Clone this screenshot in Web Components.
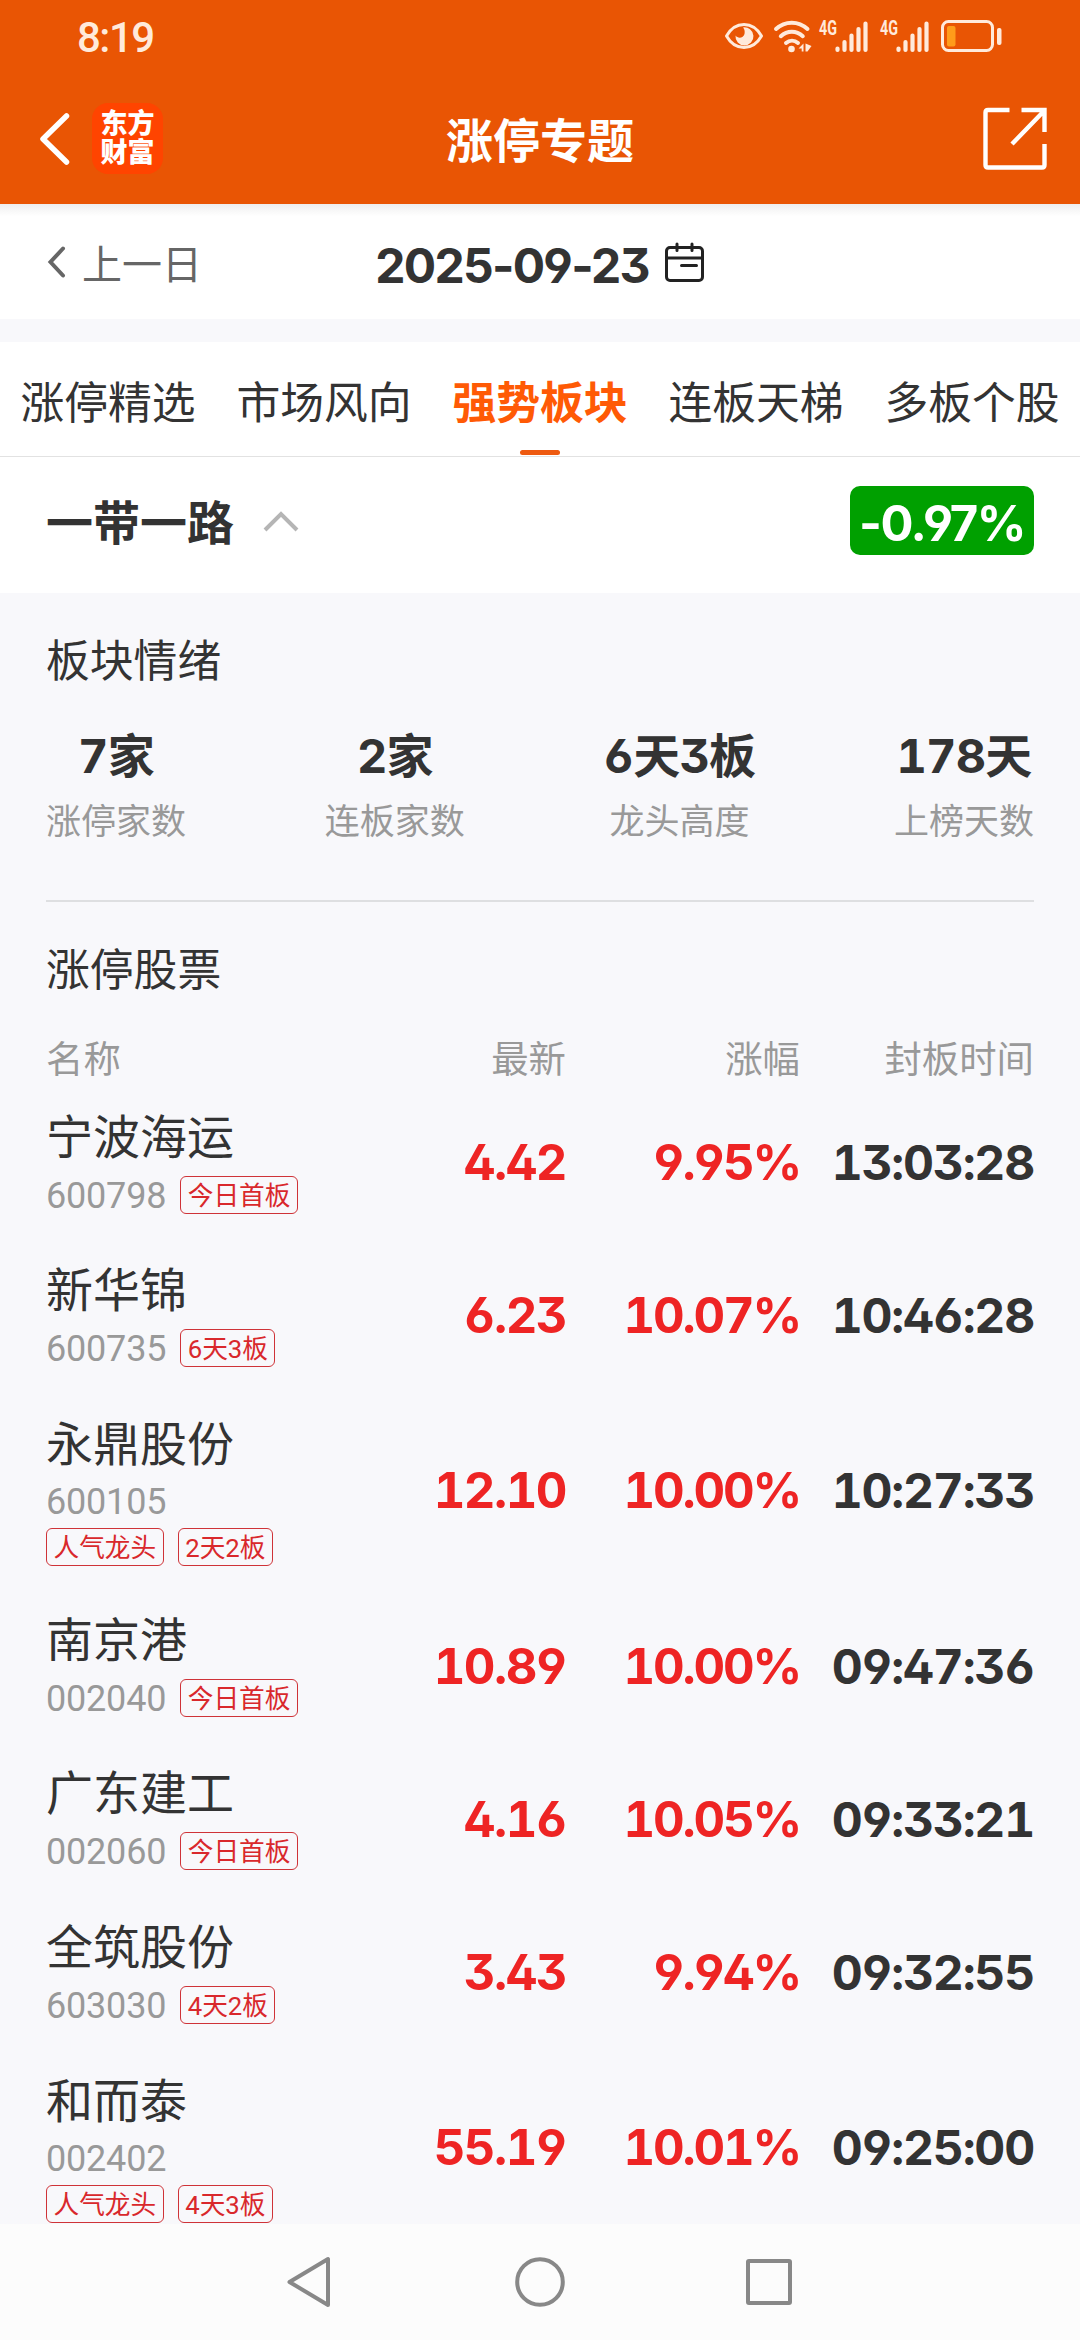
<!DOCTYPE html>
<html lang="zh-CN">
<head>
<meta charset="utf-8">
<title>涨停专题</title>
<style>
	body {
		margin: 0;
		width: 1080px;
		height: 2340px;
		overflow: hidden;
		background: #f8f8fb;
		color: #333;
		font-family: Roboto, "Noto Sans CJK SC", sans-serif;
	}
</style>
</head>
<body>
<limit-page></limit-page>

<script>
/**
 * Attach an open shadow root and fill it
 *
 * @param {HTMLElement} el
 * @param {string} html
 */
function render(el, html) {
	el.attachShadow({ mode: 'open' }).innerHTML = html;
}

class StatusBar extends HTMLElement {
	constructor() {
		super();
		const signal = `
			<svg width="51" height="42" viewBox="-1 -4 51 42">
				<text x="0" y="16" font-size="20" font-weight="700" textLength="18" lengthAdjust="spacingAndGlyphs">4G</text>
				<path fill="none" stroke="currentColor" stroke-width="4.2" stroke-linecap="round"
					d="M18.5 29.5v1.5M25.5 23v8M32.5 16.5v14.5M39.5 10v21M46.5 4.500v26.500"/>
			</svg>`;
		render(this, `
			<style>
				:host {
					display: flex;
					align-items: center;
					height: 72px;
					padding: 0 77px 0 77px;
					color: #ffeadb;
					fill: currentColor;
				}
				.time { flex: 1; font-size: 42px; font-weight: 500; letter-spacing: -1.500px; line-height: 76px; padding-top: 3px; }
				svg { display: block; }
				.eye { margin-right: 9px; }
				.wifi { margin-right: 6px; }
				.signals { display: flex; gap: 10px; margin-right: 10px; }
			</style>
			<div class="time">8:19</div>
			<svg class="eye" width="40" height="30" viewBox="0 0 40 30">
				<path d="M2.500 15C7 7 13 3.500 20 3.500S33 7 37.500 15C33 23 27 26.500 20 26.500S7 23 2.500 15z" fill="none" stroke="currentColor" stroke-width="3" stroke-linejoin="round"/>
				<path d="M19 6.500a9 9 0 1 1-7.500 8c2.500 3.500 8 2.500 9-1.500C21 10 20.500 8 19 6.500z"/>
			</svg>
			<svg class="wifi" width="39" height="34" viewBox="0 0 39 34">
				<g fill="none" stroke="currentColor" stroke-width="4" stroke-linecap="round">
					<path d="M3 10c9-8.500 22.500-8.500 31.500 0M7.800 17.200c6.500-6 15.500-6 22 0M13 24c3.500-3 8.500-3 12 0"/>
				</g>
				<circle cx="18.500" cy="30" r="3.300"/>
				<path d="M30.500 24.500v8h-1.800v-3h-3.200zM32.500 24.500l6 2.500-4 5.500h-2z"/>
			</svg>
			<div class="signals">${signal}${signal}</div>
			<svg width="63" height="34" viewBox="0 0 63 34">
				<rect x="2.500" y="2.500" width="50" height="29" rx="6" fill="none" stroke="currentColor" stroke-width="3"/>
				<rect x="7" y="7" width="8.500" height="20.500" rx="2" fill="#ff9c1a"/>
				<rect x="57" y="9" width="4.500" height="17" rx="2"/>
			</svg>
		`);
	}
}
customElements.define('status-bar', StatusBar);

class TitleBar extends HTMLElement {
	constructor() {
		super();
		render(this, `
			<style>
				:host {
					display: grid;
					grid-template-columns: 1fr auto 1fr;
					align-items: center;
					height: 132px;
					padding: 0 32px 0 38px;
					color: #fff;
				}
				.left { display: flex; align-items: center; gap: 22px; }
				.left svg { margin-top: 2px; }
				.logo {
					width: 71px;
					height: 71px;
					padding-top: 7px;
					box-sizing: border-box;
					border-radius: 16px;
					background: #ff4400;
					font-size: 27px;
					font-weight: 900;
					line-height: 29px;
					text-align: center;
				}
				.title { font-size: 47px; font-weight: 700; line-height: 60px; padding-top: 8px; margin-left: -6px; }
				.share { justify-self: end; margin-top: 1px; }
				svg { display: block; fill: none; stroke: #fff; }
			</style>
			<div class="left">
				<svg width="32" height="54" viewBox="0 0 32 54">
					<path d="M28.500 4L5 27l23.500 23" stroke-width="5.500" stroke-linecap="round" stroke-linejoin="round"/>
				</svg>
				<div class="logo">东方<br>财富</div>
			</div>
			<div class="title"><slot></slot></div>
			<svg class="share" width="67" height="66" viewBox="0 0 67 66">
				<path d="M28.500 4H7Q4.500 4 4.500 6.500V59q0 2.500 2.500 2.500h54q2.500 0 2.500-2.500V38M40.500 4h23v22M63 5L31 38" stroke-width="4.400"/>
			</svg>
		`);
	}
}
customElements.define('title-bar', TitleBar);

class DateBar extends HTMLElement {
	constructor() {
		super();
		render(this, `
			<style>
				:host {
					display: grid;
					grid-template-columns: 1fr auto 1fr;
					align-items: center;
					height: 115px;
					box-sizing: border-box;
					padding: 0 46px;
					background: linear-gradient(#eee, #fff 12px);
				}
				.prev { display: flex; align-items: center; gap: 15px; font-size: 40px; color: #666; }
				.date { display: flex; align-items: center; gap: 15px; }
				.date span { font: 700 48px/60px Inter; font-feature-settings: "ss01"; letter-spacing: -1.700px; padding-top: 9px; }
				.date svg { margin-top: 3px; }
				svg { display: block; fill: none; stroke-linecap: round; }
			</style>
			<div class="prev">
				<svg width="21" height="32" viewBox="0 0 21 32"><path d="M17 2.500L4.500 16 17 29.500" stroke="#666" stroke-width="4"/></svg>
				上一日
			</div>
			<div class="date">
				<span><slot></slot></span>
				<svg width="41" height="42" viewBox="0 0 41 42" stroke="#222" stroke-width="3">
					<rect x="2.500" y="5.500" width="36" height="33" rx="3.500"/>
					<path d="M2.500 16h36M13 2v6.500M28 2v6.500M17.500 23.500h15"/>
				</svg>
			</div>
			<div></div>
		`);
	}
}
customElements.define('date-bar', DateBar);

class TabItem extends HTMLElement {
	constructor() {
		super();
		render(this, `
			<style>
				:host {
					flex: 1;
					display: flex;
					flex-direction: column;
					align-items: center;
					font-size: 43.800px;
					line-height: 60px;
					padding-top: 32px;
				}
				:host([active]) { color: #ff5a05; font-weight: 700; }
				:host([active])::after {
					content: "";
					width: 40px;
					height: 5px;
					margin-top: 16px;
					border-radius: 3px;
					background: #ee5a10;
				}
			</style>
			<span><slot></slot></span>
		`);
	}
}
customElements.define('tab-item', TabItem);

class TabStrip extends HTMLElement {
	constructor() {
		super();
		render(this, `
			<style>
				:host {
					display: flex;
					height: 115px;
					box-sizing: border-box;
					margin-top: 23px;
					background: #fff;
					border-bottom: 1px solid #e2e2e2;
				}
			</style>
			<slot></slot>
		`);
	}
}
customElements.define('tab-strip', TabStrip);

class BoardHeader extends HTMLElement {
	constructor() {
		super();
		render(this, `
			<style>
				:host {
					display: flex;
					align-items: center;
					height: 136px;
					box-sizing: border-box;
					padding: 0 46px 9px;
					background: #fff;
				}
				.name { font-size: 47px; font-weight: 700; line-height: 60px; padding-top: 6px; }
				svg { margin-left: 29px; fill: none; stroke: #b5b5b5; stroke-width: 4; }
				.change {
					margin-left: auto;
					width: 184px;
					height: 69px;
					border-radius: 10px;
					background: #00a000;
					color: #fff;
					font: 700 49px/76px Inter;
					font-feature-settings: "ss01";
					letter-spacing: -1.500px;
					text-align: center;
				}
			</style>
			<div class="name"><slot></slot></div>
			<svg width="36" height="22" viewBox="0 0 36 22"><path d="M2 20L18 4l16 16"/></svg>
			<div class="change">${this.getAttribute('change')}</div>
		`);
	}
}
customElements.define('board-header', BoardHeader);

class SectionTitle extends HTMLElement {
	constructor() {
		super();
		render(this, `
			<style>
				:host { display: block; font-size: 43.800px; line-height: 60px; padding: 0 46px; }
			</style>
			<slot></slot>
		`);
	}
}
customElements.define('section-title', SectionTitle);

class StatItem extends HTMLElement {
	constructor() {
		super();
		render(this, `
			<style>
				:host { display: block; text-align: center; }
				.value {
					margin: -2px 0 1px;
					font: 700 47px/66px Inter, "Noto Sans CJK SC", sans-serif;
					font-feature-settings: "tnum", "ss01";
					letter-spacing: -.8px;
				}
				.label { font-size: 35px; line-height: 66px; color: #999; }
			</style>
			<div class="value">${this.getAttribute('value')}</div>
			<div class="label"><slot></slot></div>
		`);
	}
}
customElements.define('stat-item', StatItem);

class StatRow extends HTMLElement {
	constructor() {
		super();
		render(this, `
			<style>
				:host {
					display: flex;
					justify-content: space-between;
					height: 175px;
					margin: 33px 46px 39px;
					border-bottom: 2px solid #dedfe1;
				}
			</style>
			<slot></slot>
		`);
	}
}
customElements.define('stat-row', StatRow);

class ListHead extends HTMLElement {
	constructor() {
		super();
		render(this, `
			<style>
				:host {
					display: grid;
					grid-template-columns: 290px 230px 234px 234px;
					padding: 29px 46px 0;
					height: 55.500px;
					font-size: 37.400px;
					line-height: 60px;
					color: #999;
					text-align: right;
				}
				.name { text-align: left; }
			</style>
			<span class="name">名称</span>
			<span>最新</span>
			<span>涨幅</span>
			<span>封板时间</span>
		`);
	}
}
customElements.define('list-head', ListHead);

class StockRow extends HTMLElement {
	constructor() {
		super();
		const attr = (name) => this.getAttribute(name);
		const tags = attr('tags').split(' ');
		render(this, `
			<style>
				:host {
					display: grid;
					grid-template-columns: 290px 230px 234px 234px;
					align-items: center;
					height: 153.200px;
					padding: 0 46px;
				}
				:host([tall]) { height: 197.200px; }
				.stock { padding-bottom: 3px; }
				:host([tall]) .stock { padding: 1px 0 0; }
				.name { font-size: 47px; line-height: 60px; margin-bottom: 8px; }
				.meta { display: flex; flex-wrap: wrap; align-items: center; column-gap: 14px; }
				.code { color: #999; font-size: 36px; line-height: 38px; letter-spacing: -.2px; padding-top: 1px; margin-bottom: -1px; }
				:host([tall]) .code { width: 100%; padding: 0; margin-bottom: 7px; }
				.tag {
					height: 38px;
					box-sizing: border-box;
					padding: 0 6.500px;
					border: 1px solid #cf3338;
					border-radius: 6px;
					color: #d9282c;
					font-size: 25.700px;
					line-height: 38px;
				}
				.num {
					padding-top: 2px;
					color: #ee2424;
					font: 700 49px/60px Inter;
					font-feature-settings: "tnum", "ss01";
					letter-spacing: -1.500px;
					text-align: right;
					white-space: nowrap;
				}
				.rise { letter-spacing: -2.200px; }
				.time { color: #333; font-size: 48px; letter-spacing: -1.200px; }
			</style>
			<div class="stock">
				<div class="name">${attr('name')}</div>
				<div class="meta">
					<span class="code">${attr('code')}</span>
					${tags.map((t) => `<span class="tag">${t}</span>`).join('')}
				</div>
			</div>
			<div class="num">${attr('price')}</div>
			<div class="num rise">${attr('rise')}</div>
			<div class="num time">${attr('time')}</div>
		`);
		// two tags do not fit beside the code, they get a line of their own
		if (tags.length > 1) {
			this.toggleAttribute('tall', true);
		}
	}
}
customElements.define('stock-row', StockRow);

class NavBar extends HTMLElement {
	constructor() {
		super();
		render(this, `
			<style>
				:host {
					display: flex;
					justify-content: center;
					align-items: center;
					gap: 173px;
					height: 116px;
					background: #fcfcfc;
				}
				svg { fill: none; stroke: #888; stroke-width: 4; stroke-linejoin: round; }
			</style>
			<svg width="56" height="56" viewBox="0 0 56 56"><path d="M45 5v46L6.500 28z"/></svg>
			<svg width="56" height="56" viewBox="0 0 56 56"><circle cx="28" cy="28" r="22.800"/></svg>
			<svg width="56" height="56" viewBox="0 0 56 56"><rect x="7" y="7" width="42" height="42" rx="1"/></svg>
		`);
	}
}
customElements.define('nav-bar', NavBar);

const stocks = [
	['宁波海运', '600798', '今日首板', '4.42', '9.95%', '13:03:28'],
	['新华锦', '600735', '6天3板', '6.23', '10.07%', '10:46:28'],
	['永鼎股份', '600105', '人气龙头 2天2板', '12.10', '10.00%', '10:27:33'],
	['南京港', '002040', '今日首板', '10.89', '10.00%', '09:47:36'],
	['广东建工', '002060', '今日首板', '4.16', '10.05%', '09:33:21'],
	['全筑股份', '603030', '4天2板', '3.43', '9.94%', '09:32:55'],
	['和而泰', '002402', '人气龙头 4天3板', '55.19', '10.01%', '09:25:00'],
];

class LimitPage extends HTMLElement {
	constructor() {
		super();
		const rows = stocks.map(([name, code, tags, price, rise, time]) =>
			`<stock-row name="${name}" code="${code}" tags="${tags}" price="${price}" rise="${rise}" time="${time}"></stock-row>`
		).join('');
		render(this, `
			<style>
				:host { display: flex; flex-direction: column; height: 2340px; }
				header { background: #e95504; }
				main { flex: 1; min-height: 0; overflow: hidden; padding-top: 39px; box-sizing: border-box; }
			</style>
			<header>
				<status-bar></status-bar>
				<title-bar>涨停专题</title-bar>
			</header>
			<date-bar>2025-09-23</date-bar>
			<tab-strip>
				<tab-item>涨停精选</tab-item>
				<tab-item>市场风向</tab-item>
				<tab-item active>强势板块</tab-item>
				<tab-item>连板天梯</tab-item>
				<tab-item>多板个股</tab-item>
			</tab-strip>
			<board-header change="-0.97%">一带一路</board-header>
			<main>
				<section-title>板块情绪</section-title>
				<stat-row>
					<stat-item value="7家">涨停家数</stat-item>
					<stat-item value="2家">连板家数</stat-item>
					<stat-item value="6天3板">龙头高度</stat-item>
					<stat-item value="178天">上榜天数</stat-item>
				</stat-row>
				<section-title>涨停股票</section-title>
				<list-head></list-head>
				${rows}
			</main>
			<nav-bar></nav-bar>
		`);
	}
}
customElements.define('limit-page', LimitPage);
</script>
</body>
</html>
